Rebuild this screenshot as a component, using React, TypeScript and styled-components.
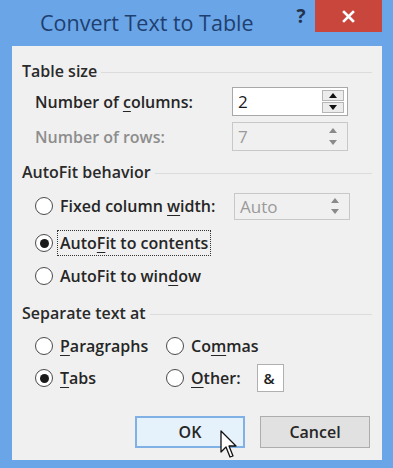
import React from 'react';
import styled, { createGlobalStyle } from 'styled-components';

const GlobalStyle = createGlobalStyle`
  html, body {
    margin: 0;
    padding: 0;
    background: #69a5e7;
  }
  body {
    font-family: "Open Sans", "Noto Sans", sans-serif;
  }
`;

const Window = styled.div`
  position: relative;
  width: 393px;
  height: 468px;
  background: #69a5e7;
  display: flex;
  flex-direction: column;
  overflow: hidden;
`;

const TitleBar = styled.div`
  height: 46px;
  display: flex;
  align-items: flex-start;
`;

const Title = styled.div`
  margin: 8px 0 0 40px;
  font-size: 21.5px;
  color: #1f3f70;
  flex: 1;
`;

const HelpButton = styled.div`
  width: 22px;
  margin-top: 3px;
  font-size: 19px;
  font-weight: 700;
  color: #23344e;
  text-align: center;
  margin-right: 3px;
`;

const CloseButton = styled.div`
  width: 67px;
  height: 32px;
  margin-right: 11px;
  background: #c9463d;
  color: #fff;
  display: flex;
  align-items: center;
  justify-content: center;
`;

const Panel = styled.div`
  height: 414px;
  margin: 0 11px 0 12px;
  background: #f0f0f0;
  box-sizing: border-box;
  padding: 12px 10px 0 10px;
  display: flex;
  flex-direction: column;
  font-size: 16px;
  color: #222;
`;

const GroupHeader = styled.div<{ $mt?: number }>`
  height: 26px;
  margin-top: ${p => p.$mt ?? 0}px;
  display: flex;
  align-items: center;
  gap: 4px;
  font-weight: 600;
  color: #2a2a2a;
  &::after {
    content: '';
    flex: 1;
    height: 1px;
    background: #dcdcdc;
    margin-top: 2px;
  }
`;

const Row = styled.div<{ $mt?: number; $h?: number }>`
  height: ${p => p.$h ?? 30}px;
  margin-top: ${p => p.$mt ?? 0}px;
  padding-left: 13px;
  display: flex;
  align-items: center;
`;

const Label = styled.span<{ $disabled?: boolean }>`
  width: 197px;
  font-weight: 600;
  color: ${p => (p.$disabled ? '#8d8d8d' : '#262626')};
`;

const Key = styled.span`
  text-decoration: underline;
  text-underline-offset: 3px;
`;

const SpinBox = styled.div<{ $disabled?: boolean; $h?: number }>`
  width: 116px;
  height: ${p => p.$h ?? 29}px;
  box-sizing: border-box;
  border: 1px solid ${p => (p.$disabled ? '#c8c8c8' : '#a8a8a8')};
  background: ${p => (p.$disabled ? '#f0f0f0' : '#fff')};
  display: flex;
  align-items: stretch;
`;

const SpinValue = styled.div<{ $disabled?: boolean }>`
  flex: 1;
  display: flex;
  align-items: center;
  padding-left: 5px;
  font-size: 17px;
  color: ${p => (p.$disabled ? '#9a9a9a' : '#1a1a1a')};
`;

const SpinButtons = styled.div`
  width: 22px;
  margin: 2px 3px 2px 0;
  display: flex;
  flex-direction: column;
  gap: 1px;
`;

const SpinHalf = styled.div<{ $disabled?: boolean }>`
  flex: 1;
  box-sizing: border-box;
  border: 1px solid ${p => (p.$disabled ? 'transparent' : '#b5b5b5')};
  background: ${p => (p.$disabled ? 'transparent' : '#ececec')};
  display: flex;
  align-items: center;
  justify-content: center;
`;

const Arrow = ({ up, color }: { up?: boolean; color: string }) => (
  <svg width="8" height="5" viewBox="0 0 8 5">
    <path d={up ? 'M0 5 L4 0 L8 5 Z' : 'M0 0 L8 0 L4 5 Z'} fill={color} />
  </svg>
);

const Spinner = ({ value, disabled, h }: { value: string; disabled?: boolean; h?: number }) => (
  <SpinBox $disabled={disabled} $h={h}>
    <SpinValue $disabled={disabled}>{value}</SpinValue>
    <SpinButtons>
      <SpinHalf $disabled={disabled}>
        <Arrow up color={disabled ? '#8a8a8a' : '#111'} />
      </SpinHalf>
      <SpinHalf $disabled={disabled}>
        <Arrow color={disabled ? '#8a8a8a' : '#111'} />
      </SpinHalf>
    </SpinButtons>
  </SpinBox>
);

const RadioCircle = styled.span<{ $checked?: boolean }>`
  width: 18px;
  height: 18px;
  box-sizing: border-box;
  border-radius: 50%;
  border: 1px solid #4a4a4a;
  background: #fff;
  display: inline-flex;
  align-items: center;
  justify-content: center;
  flex: none;
  &::after {
    content: '';
    width: 9px;
    height: 9px;
    border-radius: 50%;
    background: ${p => (p.$checked ? '#1a1a1a' : 'transparent')};
  }
`;

const RadioOption = styled.label<{ $w?: number }>`
  display: flex;
  align-items: center;
  gap: 7px;
  width: ${p => (p.$w ? `${p.$w}px` : 'auto')};
  font-weight: 600;
  color: #262626;
`;

const FocusText = styled.span`
  margin-left: -3px;
  padding: 1px 2px;
  border: 1px dotted #333;
`;

const FieldBox = styled.div`
  width: 27px;
  height: 28px;
  box-sizing: border-box;
  margin-left: 16px;
  border: 1px solid #b0b0b0;
  background: #fff;
  display: flex;
  align-items: center;
  padding-left: 6px;
  font-size: 15px;
  font-weight: 600;
`;

const Buttons = styled.div`
  margin-top: 23px;
  margin-right: 2px;
  display: flex;
  justify-content: flex-end;
  gap: 15px;
`;

const DialogButton = styled.div<{ $primary?: boolean }>`
  width: 110px;
  height: 32px;
  box-sizing: border-box;
  border: ${p => (p.$primary ? '2px solid #7fb1e6' : '1px solid #adadad')};
  background: ${p => (p.$primary ? '#e5f1fb' : '#e1e1e1')};
  display: flex;
  align-items: center;
  justify-content: center;
  font-weight: 600;
  color: #262626;
`;

const Cursor = styled.svg`
  position: absolute;
  left: 220px;
  top: 430px;
`;

export default function App() {
  return (
    <>
      <GlobalStyle />
      <Window>
        <TitleBar>
          <Title>Convert Text to Table</Title>
          <HelpButton>?</HelpButton>
          <CloseButton>
            <svg width="13" height="13" viewBox="0 0 13 13">
              <path d="M2 2 L11 11 M11 2 L2 11" stroke="#fff" strokeWidth="2.6" strokeLinecap="square" />
            </svg>
          </CloseButton>
        </TitleBar>
        <Panel>
          <GroupHeader>Table size</GroupHeader>
          <Row $mt={3} $h={29}>
            <Label>Number of <Key>c</Key>olumns:</Label>
            <Spinner value="2" />
          </Row>
          <Row $mt={6} $h={29}>
            <Label $disabled>Number of rows:</Label>
            <Spinner value="7" disabled />
          </Row>

          <GroupHeader $mt={8}>AutoFit behavior</GroupHeader>
          <Row $mt={6}>
            <RadioOption $w={199}>
              <RadioCircle />
              <span>Fixed column <Key>w</Key>idth:</span>
            </RadioOption>
            <Spinner value="Auto" disabled h={27} />
          </Row>
          <Row $mt={7}>
            <RadioOption>
              <RadioCircle $checked />
              <FocusText>Auto<Key>F</Key>it to contents</FocusText>
            </RadioOption>
          </Row>
          <Row $mt={3}>
            <RadioOption>
              <RadioCircle />
              <span>AutoFit to win<Key>d</Key>ow</span>
            </RadioOption>
          </Row>

          <GroupHeader $mt={9}>Separate text at</GroupHeader>
          <Row $mt={5}>
            <RadioOption $w={131}>
              <RadioCircle />
              <span><Key>P</Key>aragraphs</span>
            </RadioOption>
            <RadioOption>
              <RadioCircle />
              <span>Co<Key>m</Key>mas</span>
            </RadioOption>
          </Row>
          <Row $mt={2}>
            <RadioOption $w={131}>
              <RadioCircle $checked />
              <span><Key>T</Key>abs</span>
            </RadioOption>
            <RadioOption>
              <RadioCircle />
              <span><Key>O</Key>ther:</span>
            </RadioOption>
            <FieldBox>&amp;</FieldBox>
          </Row>

          <Buttons>
            <DialogButton $primary>OK</DialogButton>
            <DialogButton>Cancel</DialogButton>
          </Buttons>
        </Panel>
        <Cursor width="20" height="30" viewBox="0 0 20 30">
          <path d="M1 1 L1 22 L6 17 L10 27 L13 26 L9 16 L16 16 Z" fill="#fff" stroke="#111" strokeWidth="1.3" strokeLinejoin="round" />
        </Cursor>
      </Window>
    </>
  );
}
